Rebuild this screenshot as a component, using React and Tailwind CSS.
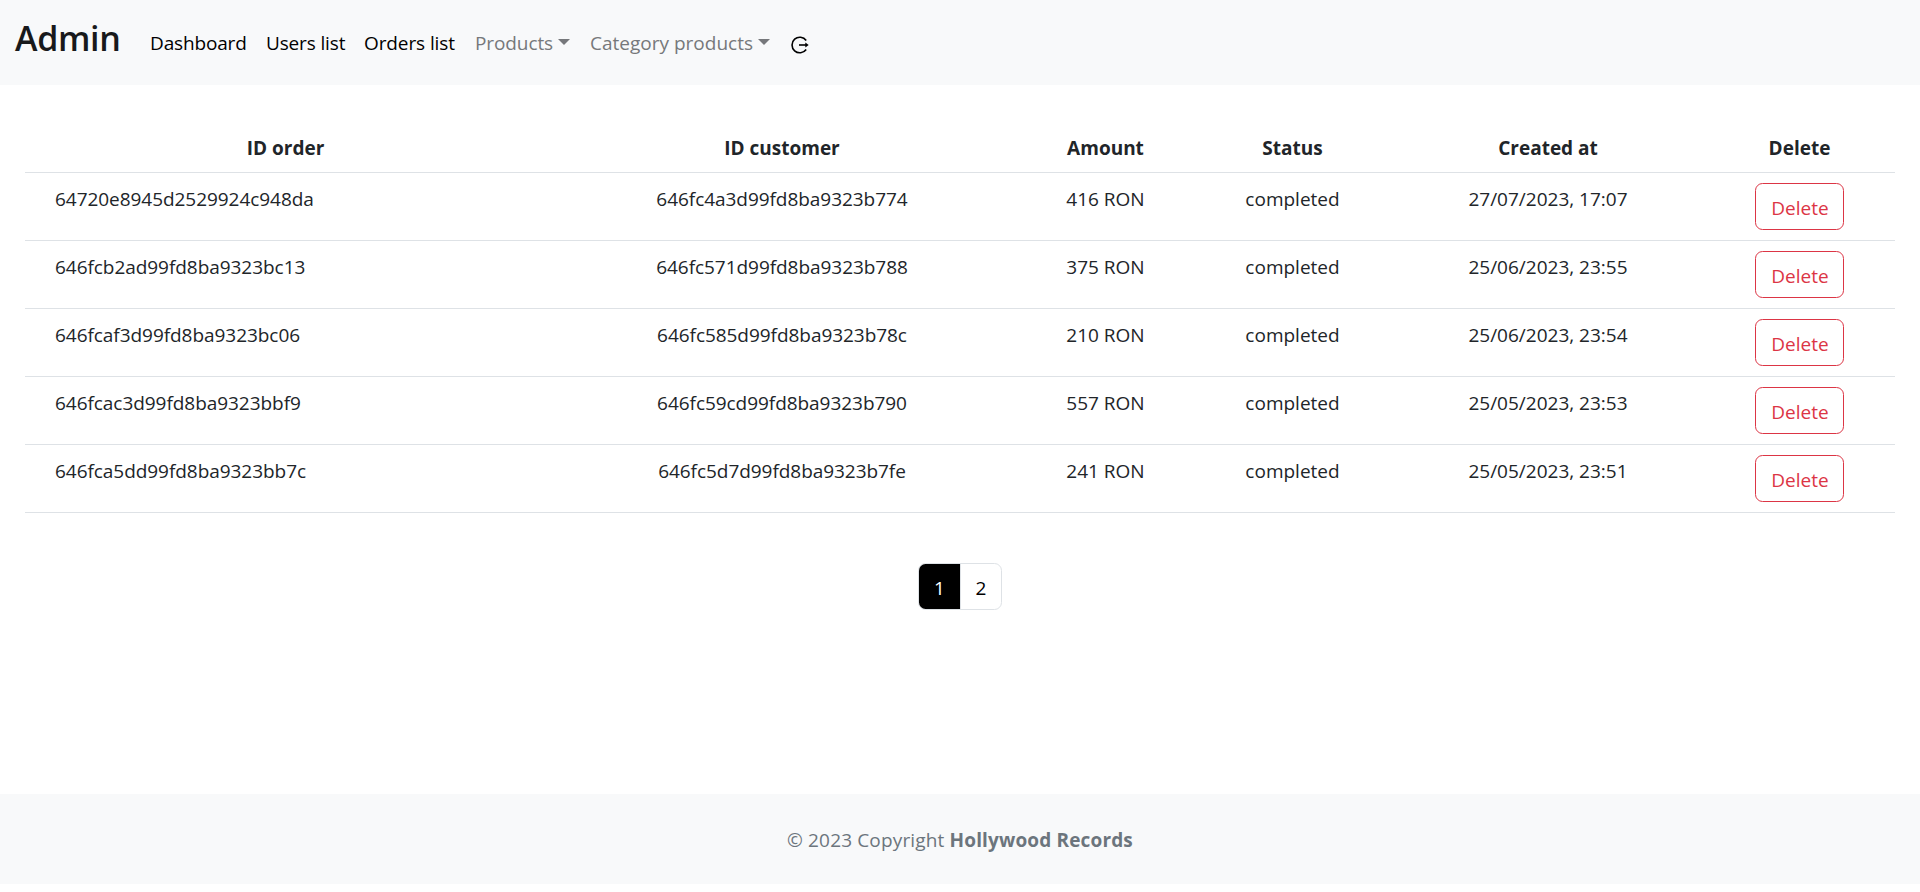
const orders = [
  ['64720e8945d2529924c948da', '646fc4a3d99fd8ba9323b774', '416 RON', 'completed', '27/07/2023, 17:07'],
  ['646fcb2ad99fd8ba9323bc13', '646fc571d99fd8ba9323b788', '375 RON', 'completed', '25/06/2023, 23:55'],
  ['646fcaf3d99fd8ba9323bc06', '646fc585d99fd8ba9323b78c', '210 RON', 'completed', '25/06/2023, 23:54'],
  ['646fcac3d99fd8ba9323bbf9', '646fc59cd99fd8ba9323b790', '557 RON', 'completed', '25/05/2023, 23:53'],
  ['646fca5dd99fd8ba9323bb7c', '646fc5d7d99fd8ba9323b7fe', '241 RON', 'completed', '25/05/2023, 23:51'],
];

const columns = ['ID order', 'ID customer', 'Amount', 'Status', 'Created at', 'Delete'];

function Caret() {
  return (
    <svg className="mb-[2px] block h-[6px] w-[12px] shrink-0" viewBox="0 0 12 6" fill="currentColor">
      <path d="M0 0h12L6 6z" />
    </svg>
  );
}

function LogoutIcon() {
  return (
    <svg className="h-5 w-5" viewBox="0 0 20 20" fill="none" stroke="black" strokeWidth="1.6">
      <path d="M16.2 5.5A7.8 7.8 0 1 0 16.2 14.5" />
      <path d="M9 10h7" strokeWidth="1.6" />
      <path d="M15.3 7.6v4.8l3.4-2.4z" fill="black" stroke="none" />
    </svg>
  );
}

function Navbar() {
  return (
    <nav className="flex h-[85px] items-start bg-[#f8f9fa] pl-[15px]">
      <h1 className="mt-[18px] w-[135px] text-[34px] leading-10 font-semibold tracking-[-0.35px] text-[#18191b]">Admin</h1>
      <ul className="mt-[28px] flex gap-5 text-[19px] leading-[30px] whitespace-nowrap text-black">
        <li className="w-[96px] tracking-[-0.15px]">Dashboard</li>
        <li className="w-[78px] tracking-[-0.15px]">Users list</li>
        <li className="w-[91px] tracking-[-0.1px]">Orders list</li>
        <li className="flex w-[95px] items-center justify-between tracking-[-0.1px] text-[#76787b]">Products<Caret /></li>
        <li className="flex w-[180px] items-center justify-between text-[#76787b]">Category products<Caret /></li>
        <li className="mt-[7px]"><LogoutIcon /></li>
      </ul>
    </nav>
  );
}

export default function App() {
  return (
    <div className="flex h-[892px] flex-col bg-white font-['Open_Sans','Noto_Sans',sans-serif] text-[19px] leading-[30px] text-[#212529]">
      <Navbar />
      <main className="flex-1 px-[25px] pt-[37px]">
        <table className="w-full table-fixed border-collapse text-center">
          <colgroup>
            <col className="w-[521px]" />
            <col className="w-[472px]" />
            <col className="w-[175px]" />
            <col className="w-[199px]" />
            <col className="w-[312px]" />
            <col className="w-[191px]" />
          </colgroup>
          <thead>
            <tr className="h-[50px] border-b border-[#dee2e6]">
              {columns.map((name) => (
                <th key={name} className="p-0 pt-[3px] font-bold">{name}</th>
              ))}
            </tr>
          </thead>
          <tbody>
            {orders.map((row) => (
              <tr key={row[0]} className="h-[68px] border-b border-[#dee2e6] align-top">
                {row.map((value, i) => (
                  <td key={i} className={i === 0 ? 'pt-[11px] pl-[30px] text-left tracking-[-0.05px]' : i === 1 ? 'pt-[11px] tracking-[-0.05px]' : 'pt-[11px]'}>{value}</td>
                ))}
                <td className="pt-[10px]">
                  <button className="inline-flex h-[47px] w-[89px] items-center justify-center rounded-[7.5px] border border-[#dc3545] pt-[3px] pl-px text-[#dc3545]">
                    Delete
                  </button>
                </td>
              </tr>
            ))}
          </tbody>
        </table>
        <div className="mt-[50px] flex justify-center">
          <div className="flex h-[47px] w-[84px] overflow-hidden rounded-[7.5px] border border-[#dee2e6] text-black">
            <span className="flex w-[41px] items-center justify-center bg-black pt-[3px] text-white">1</span>
            <span className="flex flex-1 items-center justify-center border-l border-[#dee2e6] pt-[3px]">2</span>
          </div>
        </div>
      </main>
      <footer className="mb-[8px] flex h-[90px] items-center justify-center bg-[#f8f9fa] pt-[1px] text-[#6c757d]">
        <p className="tracking-[0.15px]">© 2023 Copyright <b className="font-bold">Hollywood Records</b></p>
      </footer>
    </div>
  );
}
